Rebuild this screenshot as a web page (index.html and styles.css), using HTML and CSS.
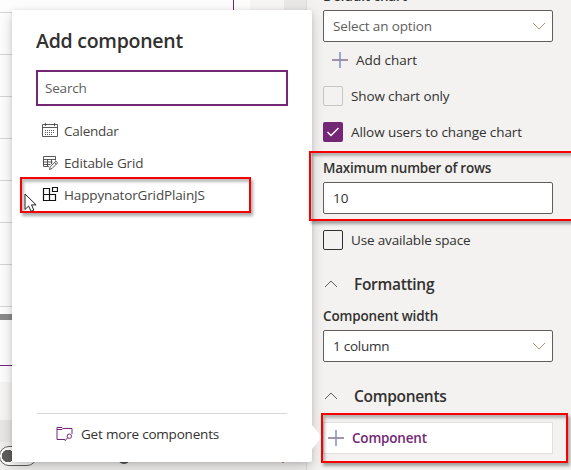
FILE: index.html
```html
<!DOCTYPE html>
<html lang="en">
<head>
<meta charset="utf-8">
<title>Add component</title>
<link rel="stylesheet" href="styles.css">
</head>
<body>
<div class="app">
  <main class="workspace">
    <div class="stage">
      <div class="form">
        <div class="grid-rows"></div>
        <div class="scrollbar"></div>
        <div class="form-end"></div>
      </div>
      <div class="gutter"></div>
      <div class="rail"></div>
    </div>
    <div class="stage-gap"></div>
    <div class="footer-edge"></div>
    <footer class="footer"><span class="toggle"></span><span class="zoom-dot"></span><span class="fit-mark"></span></footer>
  </main>
  <aside class="panel">
    <div class="label label-first">Default chart</div>
    <div class="field placeholder"><span class="t-option">Select an option</span><svg class="chevron" viewBox="0 0 14 8"><path d="M1 1l6 6 6-6"/></svg></div>
    <div class="add-chart"><svg class="plus" viewBox="0 0 16 16"><path class="plus-h" d="M0 8h16"/><path class="plus-v" d="M8 0v16"/></svg><span class="t-addchart">Add chart</span></div>
    <div class="check-row"><span class="box box-disabled"></span><span class="t-show">Show chart only</span></div>
    <div class="check-row second"><span class="box box-checked"><svg viewBox="0 0 20 20"><path d="M4.500 10l3.500 3.500 7.500-7.500"/></svg></span><span class="t-allow">Allow users to change chart</span></div>
    <div class="label label-max"><span class="t-max">Maximum number of rows</span></div>
    <div class="field"><span>10</span></div>
    <div class="check-row third"><span class="box"></span><span class="t-use">Use available space</span></div>
    <div class="section"><svg class="chevron up" viewBox="0 0 14 8"><path d="M1 7l6-6 6 6"/></svg><span class="t-format">Formatting</span></div>
    <div class="label label-width"><span class="t-width">Component width</span></div>
    <div class="field"><span class="t-column">1 column</span><svg class="chevron" viewBox="0 0 14 8"><path d="M1 1l6 6 6-6"/></svg></div>
    <div class="section section-components"><svg class="chevron up" viewBox="0 0 14 8"><path d="M1 7l6-6 6 6"/></svg><span class="t-components">Components</span></div>
    <div class="component-button"><svg class="plus" viewBox="0 0 16 16"><path class="plus-h" d="M0 8h16"/><path class="plus-v" d="M8 0v16"/></svg><span class="t-component">Component</span></div>
  </aside>

  <section class="callout">
    <h1><span class="t-title">Add component</span></h1>
    <div class="search"><span class="t-search">Search</span></div>
    <ul class="list">
      <li><svg class="icon" viewBox="0 0 16 16"><path d="M.5 1.500h15v12H.5zM.5 4.500h15M3.500 0v3M12.500 0v3"/><path class="dots" d="M3 7.500h10M3 9.500h10M3 11.500h8"/></svg><span class="t-calendar">Calendar</span></li>
      <li><svg class="icon" viewBox="0 0 16 16"><path d="M7 11.500H1.500v-10h12v4M1.500 4.500h12M1.500 7h9M1.500 9.500h7M5.500 4.500v7M9.500 4.500V9"/><path class="pencil" d="M7.500 14.500l.8-3 5.700-5.300 1.500 1.700-5.300 5.500zM12.700 7.500l1.600 1.700"/></svg><span class="t-editable">Editable Grid</span></li>
      <li><svg class="icon custom" viewBox="0 0 16 16"><path d="M1.500 1.500h6v12h-6zM1.500 7.500h12v6H7.500M10.500 .5h5v4h-5z"/></svg><span class="t-happy">HappynatorGridPlainJS</span></li>
    </ul>
    <div class="more"><svg class="folder" viewBox="0 0 17 16"><path d="M9 13.500H1V1.500h5l1 1H16V8M1 3.500h5l1-1"/><circle cx="13.300" cy="10.200" r="2.200"/><path d="M11.600 11.800L8.800 15"/></svg><span class="t-more">Get more components</span></div>
    <div class="beak"></div>
  </section>

  <div class="mark mark-item"></div>
  <div class="mark mark-rows"></div>
  <div class="mark mark-component"></div>
  <svg class="cursor" viewBox="0 0 13 19"><path d="M1 1v15.500l3.600-3.500 2.500 5.300 2.800-1.200-2.400-5.200h4.600z"/></svg>
</div>
</body>
</html>
```

FILE: styles.css
```css
* { box-sizing: border-box; }
body { margin: 0; overflow: hidden; font: 13.5px/20px "Open Sans", "Noto Sans", sans-serif; color: #323130; }
svg { display: block; flex: none; fill: none; stroke: currentColor; }
span { white-space: nowrap; }
.app { position: relative; width: 571px; height: 470px; display: flex; overflow: hidden; background: #f3f2f1; }

.workspace { width: 306px; flex: none; display: flex; flex-direction: column; }
.stage { display: flex; height: 382px; }
.form { width: 250px; background: #fdfdfd; box-shadow: 0 1px 3px #0003; display: flex; flex-direction: column; }
.grid-rows { height: 314px; width: 234px; border-right: 1px solid #742774; background: repeating-linear-gradient(#0000 0 41px, #d5d5d5 41px 42px) 0 -29px / 100% 343px no-repeat; }
.scrollbar { height: 6px; background: #8a8a8a; }
.form-end { height: 46px; border-bottom: 1px solid #742774; }
.gutter { width: 34px; background: #f6f5f4; }
.rail { flex: 1; background: #e9e8e7; }
.stage-gap { height: 38px; background: #f6f5f4; }
.footer-edge { height: 22px; background: #e8e7e6; }
.footer { height: 28px; display: flex; align-items: flex-start; background: #efeeed; }
.toggle { width: 38px; height: 20px; margin: 4px 0 0 -1px; border: 1px solid #605e5c; border-radius: 10px; background: radial-gradient(circle at 8px 9px, #605e5c 6px, #0000 6.500px) #fff; }
.zoom-dot { width: 12px; height: 12px; margin: 10px 0 0 81px; border-radius: 50%; background: #504e4d; }
.fit-mark { width: 2px; height: 2px; margin: 19px 0 0 152px; background: #b78a84; }

.panel { width: 265px; padding: 0 18px 0 16px; border-left: 1px solid #dddcdb; display: flex; flex-direction: column; background: #f3f2f1; }
.label { height: 20px; font-weight: 600; }
.label-first { height: 10px; line-height: 20px; display: flex; align-items: flex-end; padding-bottom: 4px; letter-spacing: -.15px; }
.field { height: 32px; padding: 0 6px 0 9px; border: 1px solid #605e5c; border-radius: 2px; background: #fff; display: flex; align-items: center; justify-content: space-between; }
.placeholder { color: #605e5c; }
.chevron { width: 14px; height: 8px; color: #a19f9d; }
.field .chevron { color: #b5946c; }
.up { color: #605e5c; }
.plus { width: 16px; height: 16px; }
.plus path { stroke-width: 1.500; }
.plus-h { stroke: #84708f; }
.plus-v { stroke: #7e8fc4; }
.add-chart { height: 36px; padding-left: 9px; display: flex; align-items: center; gap: 8px; }
.check-row { height: 20px; margin-top: 8px; display: flex; align-items: center; gap: 8px; }
.second { margin-top: 16px; }
.third { margin-top: 16px; }
.box { width: 20px; height: 20px; border: 1px solid #323130; border-radius: 2px; }
.box-disabled { border-color: #c8c6c4; }
.box-checked { border: 0; background: #742774; color: #fff; }
.box-checked svg { stroke-width: 1.400; }
.label-max { margin-top: 16px; height: 24px; }
.section { height: 22px; margin-top: 23px; padding-left: 1px; display: flex; align-items: center; gap: 16px; font-size: 15.500px; font-weight: 600; }
.label-width { margin-top: 11px; height: 24px; }
.component-button { height: 32px; margin-top: 15px; padding-left: 4px; border: 1px solid #e1dfdd; background: #fff; display: flex; align-items: center; gap: 8px; color: #742774; font-weight: 600; }

.callout { position: absolute; left: 12px; top: 10px; width: 300px; height: 452px; padding: 17px 24px 0; border-radius: 2px; background: #fff; box-shadow: 0 5px 14px #0000002e, 0 1px 4px #0000001c; display: flex; flex-direction: column; }
h1 { margin: 0; height: 43px; font-size: 19.500px; line-height: 28px; font-weight: 600; }
.search { width: 252px; height: 36px; border: 2px solid #742774; padding-left: 7px; display: flex; align-items: center; color: #605e5c; }
.t-search { letter-spacing: -.2px; }
.list { list-style: none; margin: 9px 0 0; padding: 0 0 0 6px; }
.list li { height: 32px; display: flex; align-items: center; gap: 6px; color: #484644; }
.icon { width: 16px; height: 16px; stroke-width: .9; }
.dots { stroke-dasharray: 1 1; }
.custom { color: #111; stroke-width: 1.200; }
.more { margin: 202px 0 0 1px; width: 250px; padding: 10px 0 0 19px; border-top: 1px solid #d8d6d4; display: flex; align-items: center; gap: 8px; }
.folder { width: 17px; height: 16px; color: #742774; }
.beak { position: absolute; left: 300px; top: 415px; width: 10px; height: 24px; background: #fff; clip-path: polygon(0 0, 100% 50%, 0 100%); }

.t-title { letter-spacing: -.25px; }
.t-option, .t-show { letter-spacing: -.13px; }
.t-allow { letter-spacing: -.08px; }
.t-max { letter-spacing: -.23px; }
.t-use { letter-spacing: -.16px; }
.t-format, .t-components { letter-spacing: -.3px; }
.t-width { letter-spacing: -.14px; }
.t-component { letter-spacing: -.2px; }
.t-calendar, .t-column { letter-spacing: -.25px; }
.t-editable { letter-spacing: -.15px; }
.t-happy { letter-spacing: -.14px; }
.t-more { letter-spacing: -.2px; }

.mark { position: absolute; border: 2px solid #f80000; box-shadow: 2px 3px 3px #0005, inset 2px 3px 3px #0004; }
.mark-item { left: 20px; top: 177px; width: 231px; height: 36px; }
.mark-rows { left: 309px; top: 151px; width: 270px; height: 70px; }
.mark-component { left: 321px; top: 413px; width: 247px; height: 50px; }
.cursor { position: absolute; left: 24px; top: 193px; width: 13px; height: 19px; fill: #fff; stroke: #222; }
```
